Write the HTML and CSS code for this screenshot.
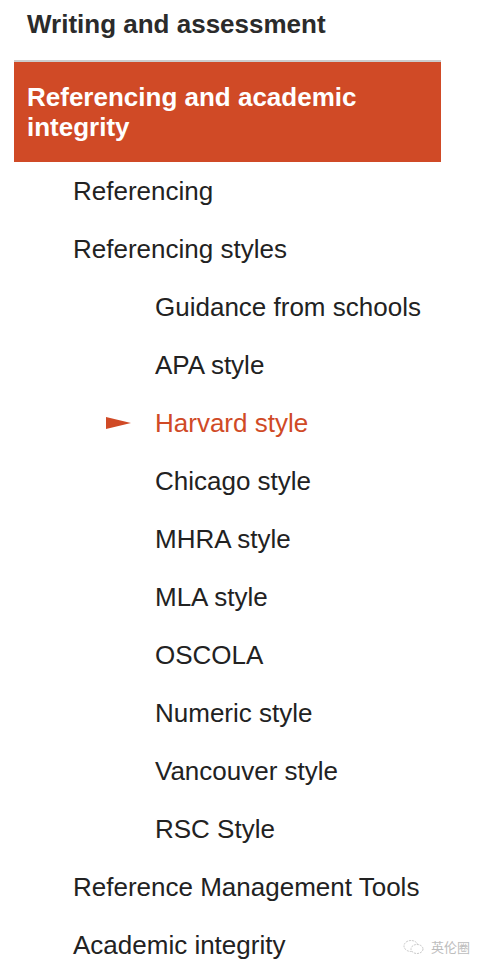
FILE: index.html
```html
<!DOCTYPE html>
<html lang="en">
<head>
    <meta charset="UTF-8">
    <meta name="viewport" content="width=device-width, initial-scale=1.0">
    <title>Referencing styles</title>
    <link rel="stylesheet" href="styles.css">
</head>
<body>

    <div class="side-nav">
        <h2 class="section-title">Writing and assessment</h2>
        <div class="current-section">Referencing and academic integrity</div>

        <ul class="nav-list">
            <li class="level-1">Referencing</li>
            <li class="level-1">Referencing styles</li>
            <li class="level-2">Guidance from schools</li>
            <li class="level-2">APA style</li>
            <li class="level-2 active">Harvard style</li>
            <li class="level-2">Chicago style</li>
            <li class="level-2">MHRA style</li>
            <li class="level-2">MLA style</li>
            <li class="level-2">OSCOLA</li>
            <li class="level-2">Numeric style</li>
            <li class="level-2">Vancouver style</li>
            <li class="level-2">RSC Style</li>
            <li class="level-1">Reference Management Tools</li>
            <li class="level-1">Academic integrity</li>
        </ul>
    </div>

    <div class="watermark">
        <svg width="22" height="16" viewBox="0 0 22 16">
            <ellipse cx="8" cy="7" rx="7" ry="5.5" fill="none" stroke="#c8c8c8" stroke-width="1" stroke-dasharray="2 1"/>
            <ellipse cx="14" cy="10" rx="6" ry="4.5" fill="#fff" stroke="#c8c8c8" stroke-width="1" stroke-dasharray="2 1"/>
        </svg>
        <span>英伦圈</span>
    </div>

</body>
</html>
```

FILE: styles.css
```css
body {
    margin: 0;
    font-family: "Liberation Sans", Arial, sans-serif;
    background-color: #ffffff;
    color: #222222;
}

.side-nav {
    width: 427px;
    margin-left: 14px;
}

.section-title {
    margin: 0;
    height: 60px;
    box-sizing: border-box;
    padding: 9px 0 0 13px;
    font-size: 26px;
    line-height: 30px;
    font-weight: bold;
    color: #2b2b2b;
}

.current-section {
    border-top: 2px solid #cccccc;
    background-color: #d04a26;
    color: #ffffff;
    font-size: 26px;
    font-weight: bold;
    line-height: 30px;
    padding: 20px 13px 20px 13px;
    height: 102px;
    box-sizing: border-box;
}

.nav-list {
    list-style-type: none;
    margin: 0;
    padding: 0;
}

.nav-list li {
    height: 58px;
    display: flex;
    align-items: center;
    font-size: 26px;
    color: #222222;
    position: relative;
}

.level-1 {
    padding-left: 59px;
}

.level-2 {
    padding-left: 141px;
}

.nav-list li.active {
    color: #d04a26;
}

/* little arrow in front of the current page */
.nav-list li.active::before {
    content: "";
    position: absolute;
    left: 92px;
    top: 23px;
    border-left: 25px solid #d04a26;
    border-top: 6px solid transparent;
    border-bottom: 6px solid transparent;
}

.watermark {
    position: absolute;
    left: 403px;
    top: 937px;
    display: flex;
    align-items: center;
    gap: 6px;
    font-family: "Noto Sans CJK SC", sans-serif;
    font-size: 13px;
    color: #bdbdbd;
}
```
